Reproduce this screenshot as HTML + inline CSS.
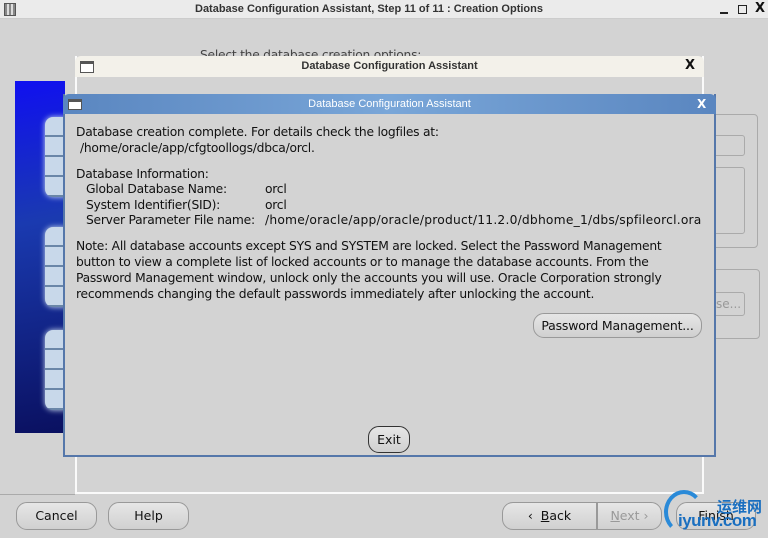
<!DOCTYPE html>
<html><head><meta charset="utf-8"><style>
*{margin:0;padding:0;box-sizing:border-box}
body{width:768px;height:538px;background:#d3d3d3;position:relative;overflow:hidden;font-family:"DejaVu Sans","Liberation Sans",sans-serif;font-size:12px;color:#111}
.abs{position:absolute}
.btn{position:absolute;border:1px solid #999;border-radius:11px;background:linear-gradient(#e6e6e6,#d0d0d0);text-align:center;font-size:12.5px;line-height:26px}
.t{position:absolute;white-space:nowrap;font-size:12.3px;letter-spacing:-0.25px}
.cyl{position:absolute;left:45px;width:22px;border-radius:8px 0 0 8px;background:repeating-linear-gradient(180deg,#c8d8ea 0 18px,#6a86a8 18px 20px),#ccd;box-shadow:0 0 6px #cde}
</style></head><body>
<div class="abs" style="left:0;top:0;width:768px;height:19px;background:#ebebeb;border-bottom:1px solid #ccc"></div>
<div class="abs" style="left:4px;top:3px;width:12px;height:13px;border:1px solid #555;background:repeating-linear-gradient(90deg,#888 0 2px,#ddd 2px 4px)"></div>
<div class="t" style="left:0;width:738px;text-align:center;top:3px;font-size:11px;font-weight:bold;color:#333;letter-spacing:0;font-family:'Liberation Sans Narrow','Liberation Sans',sans-serif">Database Configuration Assistant, Step 11 of 11 : Creation Options</div>
<div class="abs" style="left:720px;top:12px;width:8px;height:2px;background:#222"></div>
<div class="abs" style="left:738px;top:5px;width:9px;height:9px;border:1.5px solid #222"></div>
<div class="t" style="left:755px;top:1px;font-size:13px;font-weight:bold;letter-spacing:0">X</div>
<div class="t" style="left:200px;top:48px;color:#444">Select the database creation options:</div>
<div class="abs" style="left:15px;top:81px;width:50px;height:352px;background:linear-gradient(170deg,#1010f0,#1a3ab0 40%,#0a1060)"></div>
<div class="cyl" style="top:117px;height:80px"></div>
<div class="cyl" style="top:227px;height:80px"></div>
<div class="cyl" style="top:330px;height:80px"></div>
<div class="abs" style="left:700px;top:114px;width:58px;height:134px;border:1px solid #aaa;border-radius:4px"></div>
<div class="abs" style="left:700px;top:135px;width:45px;height:21px;border:1px solid #aaa;border-radius:3px"></div>
<div class="abs" style="left:700px;top:167px;width:45px;height:67px;border:1px solid #aaa;border-radius:3px"></div>
<div class="abs" style="left:700px;top:269px;width:60px;height:70px;border:1px solid #aaa;border-radius:4px"></div>
<div class="abs" style="left:700px;top:292px;width:45px;height:24px;border:1px solid #aaa;border-radius:3px;color:#999;line-height:22px;font-size:12px;padding-left:15px">se...</div>
<div class="abs" style="left:0;top:494px;width:75px;border-top:1px solid #aaa"></div>
<!-- outer dialog -->
<div class="abs" style="left:75px;top:56px;width:629px;height:438px;background:#d3d3d3;border:2px solid #fafafa;border-top:none"></div>
<div class="abs" style="left:75px;top:56px;width:629px;height:21px;background:#f3f1ea;border-radius:6px 6px 0 0"></div>
<div class="abs" style="left:80px;top:61px;width:14px;height:12px;border:1px solid #555;background:#fff;border-top:3px solid #555"></div>
<div class="t" style="left:75px;width:629px;text-align:center;top:60px;font-size:11px;font-weight:bold;color:#333;letter-spacing:0;font-family:'Liberation Sans Narrow','Liberation Sans',sans-serif">Database Configuration Assistant</div>
<div class="t" style="left:685px;top:58px;font-size:13px;font-weight:bold">X</div>
<!-- inner dialog -->
<div class="abs" style="left:63px;top:94px;width:653px;height:363px;background:#d3d3d3;border:2px solid #5577aa;border-top:none"></div>
<div class="abs" style="left:63px;top:94px;width:653px;height:20px;background:linear-gradient(90deg,#5a86c0,#79a6d8 50%,#5a86c0);border-radius:6px 6px 0 0"></div>
<div class="abs" style="left:68px;top:99px;width:14px;height:11px;border:1px solid #555;background:#fff;border-top:3px solid #555"></div>
<div class="t" style="left:63px;width:653px;text-align:center;top:98px;font-size:11px;color:#fff;letter-spacing:0;font-family:'Liberation Sans Narrow','Liberation Sans',sans-serif">Database Configuration Assistant</div>
<div class="t" style="left:697px;top:97px;font-size:12px;font-weight:bold;color:#fff">X</div>
<div class="t" style="left:76px;top:125px">Database creation complete. For details check the logfiles at:</div>
<div class="t" style="left:80px;top:141px">/home/oracle/app/cfgtoollogs/dbca/orcl.</div>
<div class="t" style="left:76px;top:167px">Database Information:</div>
<div class="t" style="left:86px;top:182px">Global Database Name:</div>
<div class="t" style="left:265px;top:182px">orcl</div>
<div class="t" style="left:86px;top:198px">System Identifier(SID):</div>
<div class="t" style="left:265px;top:198px">orcl</div>
<div class="t" style="left:86px;top:213px">Server Parameter File name:</div>
<div class="t" style="left:265px;top:213px;letter-spacing:0.2px">/home/oracle/app/oracle/product/11.2.0/dbhome_1/dbs/spfileorcl.ora</div>
<div class="t" style="left:76px;top:239px">Note: All database accounts except SYS and SYSTEM are locked. Select the Password Management</div>
<div class="t" style="left:76px;top:255px">button to view a complete list of locked accounts or to manage the database accounts. From the</div>
<div class="t" style="left:76px;top:271px">Password Management window, unlock only the accounts you will use. Oracle Corporation strongly</div>
<div class="t" style="left:76px;top:287px">recommends changing the default passwords immediately after unlocking the account.</div>
<div class="btn" style="left:533px;top:313px;width:169px;height:25px;line-height:23px;letter-spacing:-0.2px">Password Management...</div>
<div class="btn" style="left:368px;top:426px;width:42px;height:27px;line-height:25px;border:1.5px solid #333">Exit</div>
<!-- bottom buttons -->
<div class="btn" style="left:16px;top:502px;width:81px;height:28px">Cancel</div>
<div class="btn" style="left:108px;top:502px;width:81px;height:28px">Help</div>
<div class="btn" style="left:502px;top:502px;width:95px;height:28px;border-radius:11px 0 0 11px">‹ &nbsp;<u>B</u>ack</div>
<div class="btn" style="left:597px;top:502px;width:65px;height:28px;color:#999;border-radius:0 11px 11px 0"><u>N</u>ext ›</div>
<div class="btn" style="left:676px;top:502px;width:80px;height:28px">Finish</div>
<div class="abs" style="left:664px;top:490px;width:40px;height:44px;border:4px solid #2a8ad8;border-right-color:transparent;border-bottom-color:transparent;border-radius:50%"></div>
<div class="t" style="left:717px;top:496px;font-size:15px;color:#1a6fc0;font-weight:bold;letter-spacing:0;font-family:'Liberation Sans','Noto Sans CJK SC',sans-serif">运维网</div>
<div class="t" style="left:678px;top:511px;font-size:17px;color:#1a6fc0;font-weight:bold;letter-spacing:-0.5px;font-family:'Liberation Sans',sans-serif">iyunv.com</div>
</body></html>
